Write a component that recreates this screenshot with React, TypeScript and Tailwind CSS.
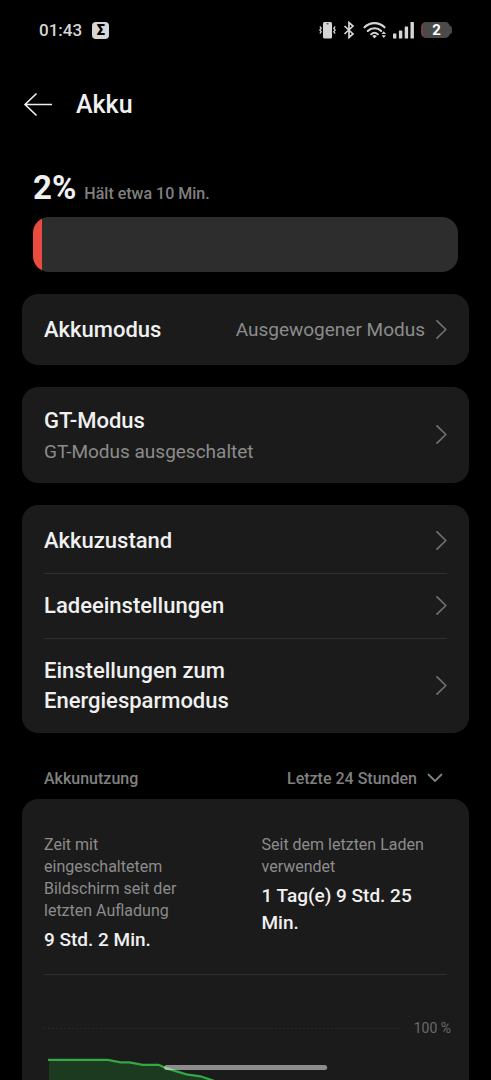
import { useState } from "react";

type RowProps = {
  title: string;
  subtitle?: string;
  value?: string;
  className?: string;
};

type Stat = {
  label: string;
  value: string;
};

const batteryLevel = 2;

const settingsRows = [
  "Akkuzustand",
  "Ladeeinstellungen",
  "Einstellungen zum Energiesparmodus",
];

const stats: Stat[] = [
  {
    label: "Zeit mit eingeschaltetem Bildschirm seit der letzten Aufladung",
    value: "9 Std. 2 Min.",
  },
  { label: "Seit dem letzten Laden verwendet", value: "1 Tag(e) 9 Std. 25 Min." },
];

function ChevronRight() {
  return (
    <svg
      className="h-5 w-3 shrink-0 text-[#707070]"
      viewBox="0 0 12 20"
      fill="none"
      stroke="currentColor"
      strokeWidth="1.7"
      strokeLinecap="round"
      strokeLinejoin="round"
      aria-hidden="true"
    >
      <path d="M2 .8 10.800 9.500 2 18.200" />
    </svg>
  );
}

function StatusBar() {
  return (
    <div className="flex h-15 items-center justify-between px-[39px] text-[#d6d6d6]">
      <div className="flex items-center gap-2.5">
        <span className="text-[17px] leading-5 font-medium">01:43</span>
        <span className="flex size-[17px] items-center justify-center rounded bg-[#d6d6d6] text-[15px] leading-4 font-black text-black">
          Σ
        </span>
      </div>

      <div className="flex items-center">
        {/* Vibrate */}
        <svg className="h-[18px] w-[18px]" viewBox="0 0 18 18" fill="none" aria-hidden="true">
          <rect x="4" y="1" width="9" height="16.500" rx="1.500" fill="currentColor" />
          <path d="M7.500 2.800h2" stroke="#222" strokeWidth="1" />
          <path
            d="m.8 5.500 1.500 1.700L.8 9l1.500 1.800-1.500 1.700M16.200 5.500l-1.500 1.700L16.200 9l-1.500 1.800 1.500 1.700"
            stroke="currentColor"
            strokeWidth="1.200"
          />
        </svg>
        {/* Bluetooth */}
        <svg
          className="ml-1.5 h-[18px] w-3"
          viewBox="0 0 12 18"
          fill="none"
          stroke="currentColor"
          strokeWidth="1.700"
          aria-hidden="true"
        >
          <path d="m1.500 5 8.500 8-4 3.500v-15L10 5l-8.500 8" />
        </svg>
        {/* Wi-Fi */}
        <svg className="ml-2 h-[18px] w-6" viewBox="0 0 24 18" fill="none" aria-hidden="true">
          <g stroke="currentColor" strokeWidth="2.100" strokeLinecap="round">
            <path d="M1.500 6.300c5.400-5.600 14.600-5.600 20 0" />
            <path d="M4.800 10c3.600-3.600 9.800-3.600 13.400 0" />
            <path d="M8.200 13.200c1.900-1.700 4.700-1.700 6.600 0" />
          </g>
          <path d="m11.500 17.500-2.300-2.600c1.400-1.200 3.200-1.200 4.600 0z" fill="currentColor" />
          <path d="m20.800 10.300 2.200 2.700h-4.400zM20.800 17l2.200-2.700h-4.400z" fill="currentColor" />
        </svg>
        {/* Signal */}
        <svg
          className="ml-1.5 h-[18px] w-[22px]"
          viewBox="0 0 22 18"
          fill="currentColor"
          aria-hidden="true"
        >
          <rect x="0" y="12.500" width="3.400" height="5" rx=".6" />
          <rect x="5.900" y="9.500" width="3.400" height="8" rx=".6" />
          <rect x="11.700" y="5.500" width="3.400" height="12" rx=".6" />
          <rect x="17.500" y="1" width="3.400" height="16.500" rx=".6" />
        </svg>
        <div className="ml-1.5 flex items-center">
          <span className="flex h-4 w-[29px] items-center justify-center rounded-[5px] border-l-2 border-[#70423f] bg-[#4a4a4a] text-[15px] leading-4 font-bold text-white">
            {batteryLevel}
          </span>
          <span className="h-2 w-0.5 rounded-r bg-[#4a4a4a]" />
        </div>
      </div>
    </div>
  );
}

function Row({ title, subtitle, value, className = "" }: RowProps) {
  return (
    <button
      type="button"
      className={`flex w-full items-center justify-between gap-2.5 text-left ${className}`}
    >
      <span className="flex max-w-60 flex-col gap-1">
        <span className="text-[22px] leading-[30px] font-medium">{title}</span>
        {subtitle && (
          <span className="text-[19px] leading-6 whitespace-nowrap text-[#8c8c8c]">{subtitle}</span>
        )}
      </span>
      <span className="flex items-center gap-2.5">
        {value && <span className="text-[19px] leading-6 text-[#8c8c8c]">{value}</span>}
        <ChevronRight />
      </span>
    </button>
  );
}

function UsageChart() {
  return (
    <div className="-mr-1 flex items-start gap-3.5 pt-[43px]">
      <svg
        className="mt-2.5 min-w-0 flex-1"
        viewBox="0 0 357 160"
        fill="none"
        role="img"
        aria-label="Akkunutzung"
      >
        <path d="M0 .5h357" stroke="#292929" strokeDasharray="2 2" />
        <path
          d="M5 32h59l13 2.500h9l13 2.500h16l8 3.500 10 3 10 3 14 2 12 4 30 10V160H5z"
          fill="#1c3a20"
        />
        <path
          d="M4 32h60l13 2.500h9l13 2.500h16l8 3.500 10 3 10 3 14 2 12 4 30 10"
          stroke="#35a745"
          strokeWidth="2.200"
        />
      </svg>
      <span className="text-[14px] leading-5 whitespace-nowrap text-[#6b6b6b]">100 %</span>
    </div>
  );
}

export default function App() {
  const [range, setRange] = useState("24h");

  return (
    <div className="relative h-screen overflow-hidden bg-black font-[Roboto,sans-serif] text-[#f0f0f0]">
      <StatusBar />

      <header className="flex items-center gap-6 px-6 pt-6">
        <button type="button" aria-label="Zurück">
          <svg
            className="h-6 w-7"
            viewBox="0 0 28 24"
            fill="none"
            stroke="currentColor"
            strokeWidth="1.700"
            strokeLinecap="round"
            strokeLinejoin="round"
            aria-hidden="true"
          >
            <path d="M12 1 1 11.500 12 22M1 11.500h26.500" />
          </svg>
        </button>
        <h1 className="text-[25px] leading-[42px] font-medium">Akku</h1>
      </header>

      <main className="flex flex-col px-[22px] pt-[42px]">
        <section className="px-[11px]">
          <div className="flex items-baseline gap-2">
            <span className="text-[33px] leading-10 font-bold">{batteryLevel}%</span>
            <span className="text-[16px] leading-6 font-medium text-[#808080]">
              Hält etwa 10 Min.
            </span>
          </div>
          <div
            className="mt-[9px] h-[55px] overflow-hidden rounded-2xl bg-[#2d2d2d]"
            role="progressbar"
            aria-label="Akku"
            aria-valuenow={batteryLevel}
          >
            <div className="h-full bg-[#e94b40]" style={{ width: `${batteryLevel}%` }} />
          </div>
        </section>

        <div className="mt-[22px] flex flex-col gap-[22px]">
          <section className="rounded-2xl bg-[#1b1b1b] px-[22px]">
            <Row title="Akkumodus" value="Ausgewogener Modus" className="pt-[21px] pb-5" />
          </section>

          <section className="rounded-2xl bg-[#1b1b1b] px-[22px]">
            <Row title="GT-Modus" subtitle="GT-Modus ausgeschaltet" className="py-[19px]" />
          </section>

          <section className="divide-y divide-[#303030] rounded-2xl bg-[#1b1b1b] px-[22px] pt-1">
            {settingsRows.map((title) => (
              <Row key={title} title={title} className="py-[17px]" />
            ))}
          </section>
        </div>

        <div className="flex items-center justify-between px-[22px] pt-[34px] pb-2 text-[16px] leading-6 font-medium text-[#808080]">
          <h2>Akkunutzung</h2>
          <div className="relative">
            <select
              aria-label="Akkunutzung"
              className="appearance-none bg-transparent pr-[30px]"
              value={range}
              onChange={(e) => setRange(e.target.value)}
            >
              <option value="24h">Letzte 24 Stunden</option>
            </select>
            <svg
              className="pointer-events-none absolute top-1.5 right-1 h-2.5 w-4"
              viewBox="0 0 16 10"
              fill="none"
              stroke="currentColor"
              strokeWidth="1.800"
              strokeLinecap="round"
              strokeLinejoin="round"
              aria-hidden="true"
            >
              <path d="m1.500 1.500 6.500 6.500 6.500-6.500" />
            </svg>
          </div>
        </div>

        <section className="rounded-t-2xl bg-[#1b1b1b] px-[22px] pt-[35px]">
          <dl className="grid grid-cols-2 gap-x-8 border-b border-[#303030] pb-[21px]">
            {stats.map((stat) => (
              <div key={stat.label} className="flex flex-col gap-1 pr-4">
                <dt className="text-[16px] leading-[22px] text-[#8c8c8c]">{stat.label}</dt>
                <dd className="text-[19px] leading-[27px] font-medium">{stat.value}</dd>
              </div>
            ))}
          </dl>
          <UsageChart />
        </section>
      </main>

      {/* Gesture bar */}
      <div className="absolute bottom-2.5 left-1/2 h-[5px] w-1/3 -translate-x-1/2 rounded-full bg-white/50" />
    </div>
  );
}
